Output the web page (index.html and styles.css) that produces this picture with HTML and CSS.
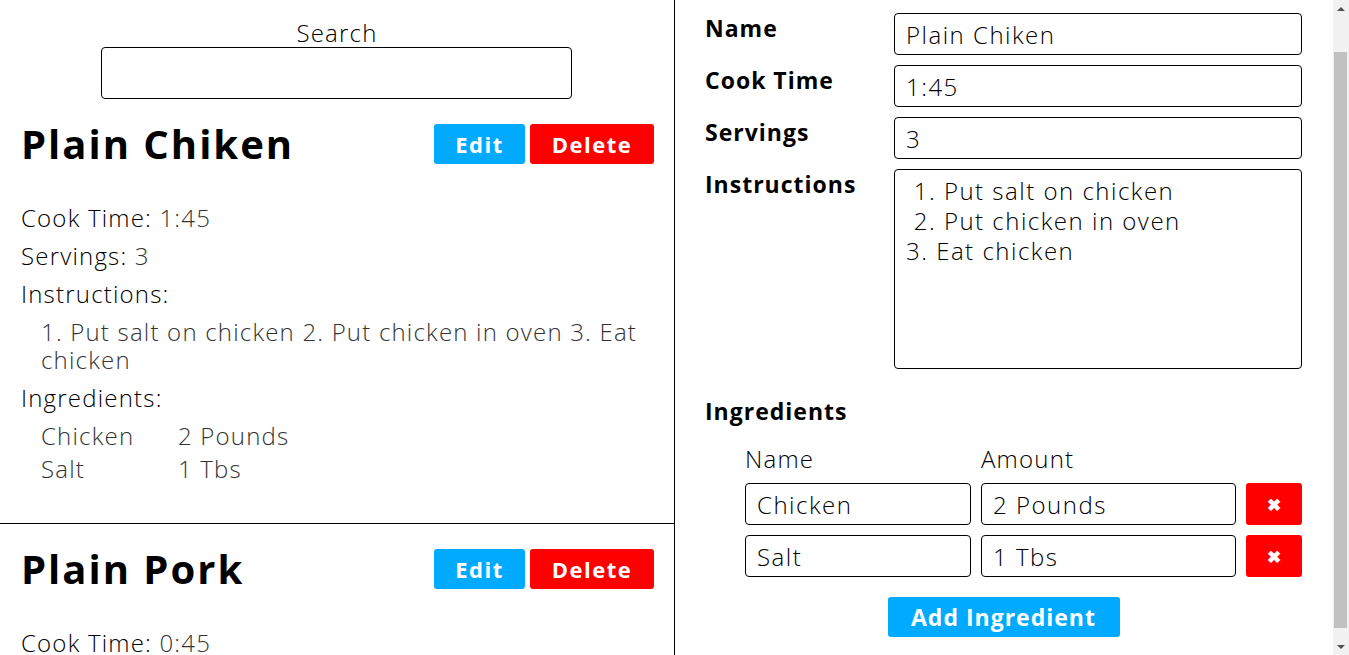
FILE: index.html
```html
<!DOCTYPE html>
<html lang="en">
<head>
<meta charset="utf-8">
<title>Recipes</title>
<link rel="stylesheet" href="styles.css">
</head>
<body>
<div class="app">
  <aside class="list">
    <div class="search">
      <label class="search-label" for="search">Search</label>
      <input class="search-input" id="search" type="text">
    </div>

    <article class="recipe">
      <header class="recipe-head">
        <h1 class="recipe-title">Plain Chiken</h1>
        <div class="actions">
          <button class="btn btn-edit">Edit</button>
          <button class="btn btn-delete">Delete</button>
        </div>
      </header>
      <p class="field"><span class="field-label">Cook Time:</span> <span class="value">1:45</span></p>
      <p class="field"><span class="field-label">Servings:</span> <span class="value">3</span></p>
      <p class="field"><span class="field-label">Instructions:</span></p>
      <p class="instructions value">1. Put salt on chicken 2. Put chicken in oven 3. Eat chicken</p>
      <p class="field"><span class="field-label">Ingredients:</span></p>
      <ul class="ingredients">
        <li class="ingredient value"><span>Chicken</span><span>2 Pounds</span></li>
        <li class="ingredient value"><span>Salt</span><span>1 Tbs</span></li>
      </ul>
    </article>

    <article class="recipe">
      <header class="recipe-head">
        <h1 class="recipe-title">Plain Pork</h1>
        <div class="actions">
          <button class="btn btn-edit">Edit</button>
          <button class="btn btn-delete">Delete</button>
        </div>
      </header>
      <p class="field"><span class="field-label">Cook Time:</span> <span class="value">0:45</span></p>
    </article>
  </aside>

  <main class="editor">
    <form class="form">
      <label class="form-label" for="f-name">Name</label>
      <input class="form-input" id="f-name" type="text" value="Plain Chiken">
      <label class="form-label" for="f-time">Cook Time</label>
      <input class="form-input" id="f-time" type="text" value="1:45">
      <label class="form-label" for="f-serv">Servings</label>
      <input class="form-input" id="f-serv" type="text" value="3">
      <label class="form-label" for="f-instr">Instructions</label>
      <textarea class="form-textarea" id="f-instr"> 1. Put salt on chicken
 2. Put chicken in oven
3. Eat chicken</textarea>
    </form>

    <section class="ing-edit">
      <h2 class="form-label ing-title">Ingredients</h2>
      <div class="ing-grid">
        <span class="ing-head">Name</span>
        <span class="ing-head">Amount</span>
        <span></span>
        <input class="form-input" type="text" value="Chicken">
        <input class="form-input" type="text" value="2 Pounds">
        <button class="btn btn-delete btn-x" type="button">&#x2716;</button>
        <input class="form-input" type="text" value="Salt">
        <input class="form-input" type="text" value="1 Tbs">
        <button class="btn btn-delete btn-x" type="button">&#x2716;</button>
      </div>
      <div class="add-row">
        <button class="btn btn-edit btn-add" type="button">Add Ingredient</button>
      </div>
    </section>
  </main>

  <div class="scrollbar" aria-hidden="true">
    <span class="sb-arrow sb-up"></span>
    <div class="sb-track"><span class="sb-thumb"></span></div>
    <span class="sb-arrow sb-down"></span>
  </div>
</div>
</body>
</html>
```
FILE: styles.css
```css
* { box-sizing: border-box; }

html, body {
  margin: 0;
  height: 100%;
}

body {
  font-family: "Open Sans", "Liberation Sans", sans-serif;
  font-weight: 300;
  font-size: 24px;
  letter-spacing: 1.2px;
  color: #000;
  background: #fff;
  overflow: hidden;
}

.app {
  display: flex;
  height: 100vh;
}

/* ---------- left list ---------- */
.list {
  width: 675px;
  flex: none;
  border-right: 1px solid #000;
  overflow: hidden;
}

.search {
  display: flex;
  flex-direction: column;
  align-items: center;
  padding-top: 19px;
}

.search-label {
  line-height: 28px;
}

.search-input {
  width: 471px;
  height: 52px;
  border: 1px solid #000;
  border-radius: 4px;
  font: inherit;
  letter-spacing: inherit;
  padding: 0 10px;
  margin-left: -1px;
}

.recipe {
  padding: 25px 20px 40px 21px;
  border-bottom: 1px solid #000;
}

.recipe-head {
  display: flex;
  align-items: center;
  justify-content: space-between;
  height: 40px;
  margin-bottom: 40px;
}

.recipe-title {
  margin: 0;
  font-size: 40px;
  font-weight: 700;
  letter-spacing: 2px;
  line-height: 40px;
}

.actions {
  display: flex;
  gap: 5px;
}

.btn {
  font-family: inherit;
  font-weight: 700;
  font-size: 22px;
  letter-spacing: 1.5px;
  color: #fff;
  border: none;
  border-radius: 3px;
  height: 40px;
  padding: 0;
  cursor: pointer;
}

.btn-edit { background: #00aaff; width: 91px; }
.btn-delete { background: #ff0000; width: 124px; }

.field {
  margin: 10px 0;
  line-height: 28px;
}

.field:first-of-type { margin-top: 0; }

.value { color: #333; }

.instructions {
  margin: 10px 0;
  padding-left: 20px;
  line-height: 28px;
}

.ingredients {
  list-style: none;
  margin: 10px 0 0;
  padding: 0 0 0 20px;
}

.ingredient {
  display: grid;
  grid-template-columns: 137px auto;
  line-height: 28px;
  margin-bottom: 5px;
}

.ingredient:last-child { margin-bottom: 0; }

/* ---------- right editor ---------- */
.editor {
  flex: 1;
  min-width: 0;
  overflow: hidden;
  padding: 13px 31px 29px 30px;
}

.form {
  display: grid;
  grid-template-columns: 189px 1fr;
  row-gap: 10px;
  align-items: start;
}

.form-label {
  margin: 0;
  font-size: 23px;
  font-weight: 700;
  letter-spacing: 1px;
  line-height: 30px;
}

.form-input {
  height: 42px;
  width: 100%;
  border: 1px solid #000;
  border-radius: 4px;
  padding: 0 11px;
  font: inherit;
  letter-spacing: 1.5px;
  color: #000;
  background: #fff;
}

.form-textarea {
  height: 200px;
  width: 100%;
  border: 1px solid #000;
  border-radius: 4px;
  padding: 6px 11px;
  font: inherit;
  letter-spacing: 1.5px;
  line-height: 30px;
  color: #000;
  resize: none;
}

.ing-edit {
  margin-top: 27px;
}

.ing-grid {
  display: grid;
  grid-template-columns: 226px 1fr 56px;
  column-gap: 10px;
  row-gap: 10px;
  margin: 18px 0 0 40px;
}

.ing-head {
  line-height: 30px;
  margin-bottom: -1px;
}

.btn-x {
  width: 56px;
  height: 42px;
  font-size: 17px;
  letter-spacing: 0;
}

.add-row {
  display: flex;
  justify-content: center;
  margin-top: 20px;
}

.btn-add {
  width: 232px;
  font-size: 23px;
  letter-spacing: 1px;
}

/* ---------- scrollbar replica ---------- */
.scrollbar {
  width: 16px;
  flex: none;
  display: flex;
  flex-direction: column;
  background: #f1f1f1;
}

.sb-arrow {
  height: 17px;
  flex: none;
  display: flex;
  align-items: center;
  justify-content: center;
}

.sb-arrow::before {
  content: "";
  border-left: 4px solid transparent;
  border-right: 4px solid transparent;
}

.sb-up::before { border-bottom: 4px solid #505050; }
.sb-down::before { border-top: 4px solid #505050; }

.sb-track {
  flex: 1;
  display: flex;
  padding: 35px 2px 10px 1px;
}

.sb-thumb {
  flex: 1;
  background: #c1c1c1;
}
```
